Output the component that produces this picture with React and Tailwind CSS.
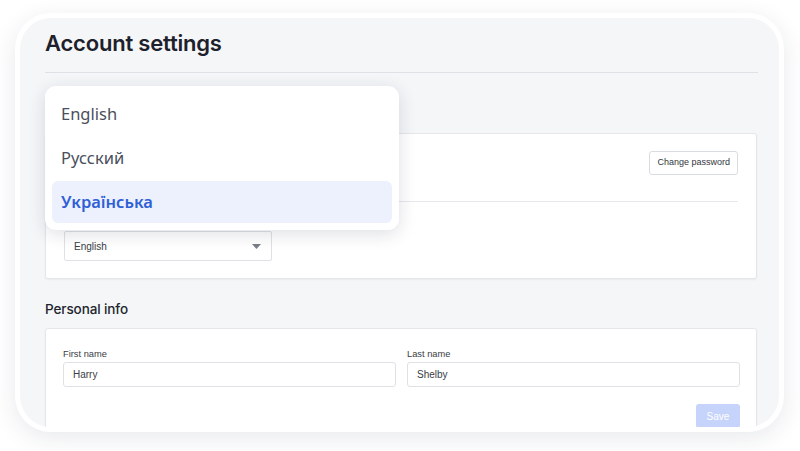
const sans = "font-['Liberation_Sans',Arial,sans-serif]";

const LanguageMenu = () => {
    const langs = ["English", "Русский", "Українська"];
    const active = "Українська";
    return (
        <div className="absolute left-0 top-[13px] w-[354px] rounded-[11px] bg-white p-[7px] shadow-[0_4px_18px_rgba(20,30,60,0.14)] font-['Noto_Sans',sans-serif] flex flex-col gap-[2px]">
            {langs.map((l) => (
                <div key={l}
                    className={l === active
                        ? "h-[42px] flex items-center px-[9px] rounded-[6px] bg-[#edf1fd] text-[#2f5fd6] font-semibold text-[16.5px]"
                        : "h-[42px] flex items-center px-[9px] rounded-[6px] text-[#4a4f5c] text-[16.5px]"}>
                    {l}
                </div>
            ))}
        </div>
    );
};

const Field = ({ label, value }) => (
    <div className="flex-1 flex flex-col">
        <label className={`${sans} text-[9.3px] leading-[12px] text-[#3a3d44] mb-[2px]`}>{label}</label>
        <div className={`${sans} h-[25px] border border-[#dfe1e5] rounded-[3px] bg-white flex items-center px-[9px] text-[10px] text-[#3a3d44]`}>
            {value}
        </div>
    </div>
);

const App = () => {
    return (
        <div className="w-[800px] h-[451px] bg-white pt-[13px] pl-[15px] overflow-hidden">
            <div className="w-[769px] h-[419px] rounded-[36px] border-[5px] border-white bg-white shadow-[0_6px_24px_rgba(30,40,70,0.10)]">
                <div className="w-full h-full rounded-[31px] bg-[#f5f6f8] overflow-hidden pl-[25px] pr-[21px] pt-[11px]">
                    <h1 className="font-['Inter',sans-serif] font-semibold text-[22px] leading-[28px] text-[#1d212b] tracking-[-0.2px]">
                        Account settings
                    </h1>
                    <div className="mt-[15px] border-b border-[#dfe1e6]" />

                    <div className="relative">
                        {/* section heading sits under the open menu */}
                        <div className="h-[60px]" />
                        <div className="mr-[1px] bg-white border border-[#e4e6ea] rounded-[3px] shadow-[0_1px_2px_rgba(0,0,0,0.05)] px-[18px] pt-[17px] pb-[17px]">
                            <div className="flex items-start justify-end pb-[26px] border-b border-[#e6e8eb]">
                                <button type="button"
                                    className={`${sans} h-[24px] px-[7px] border border-[#d9dce1] rounded-[3px] bg-white text-[9px] text-[#33363d]`}>
                                    Change password
                                </button>
                            </div>
                            <div className="h-[12px] mt-[10px] mb-[7px]" />
                            <div className="w-[208px] h-[30px] border border-[#dfe1e5] rounded-[2px] flex items-center justify-between pl-[9px] pr-[10px]">
                                <span className={`${sans} text-[10px] text-[#3a3d44]`}>English</span>
                                <svg width="9" height="5" viewBox="0 0 9 5"><path d="M0 0h9L4.5 5z" fill="#7a7e88" /></svg>
                            </div>
                        </div>
                        <LanguageMenu />
                    </div>

                    <h2 className="font-['Inter',sans-serif] font-medium text-[13.5px] leading-[20px] text-[#22252d] tracking-[-0.1px] pt-[20px] mb-[9px]">
                        Personal info
                    </h2>
                    <div className="mr-[1px] bg-white border border-[#e4e6ea] rounded-[3px] shadow-[0_1px_2px_rgba(0,0,0,0.05)] pl-[17px] pr-[16px] pt-[19px] pb-[16px]">
                        <div className="flex gap-[11px]">
                            <Field label="First name" value="Harry" />
                            <Field label="Last name" value="Shelby" />
                        </div>
                        <div className="flex justify-end mt-[17px]">
                            <button type="button" disabled
                                className={`${sans} h-[24px] w-[44px] rounded-[3px] bg-[#c6d3fb] text-white text-[10px]`}>
                                Save
                            </button>
                        </div>
                    </div>
                </div>
            </div>
        </div>
    );
};

export default App;
